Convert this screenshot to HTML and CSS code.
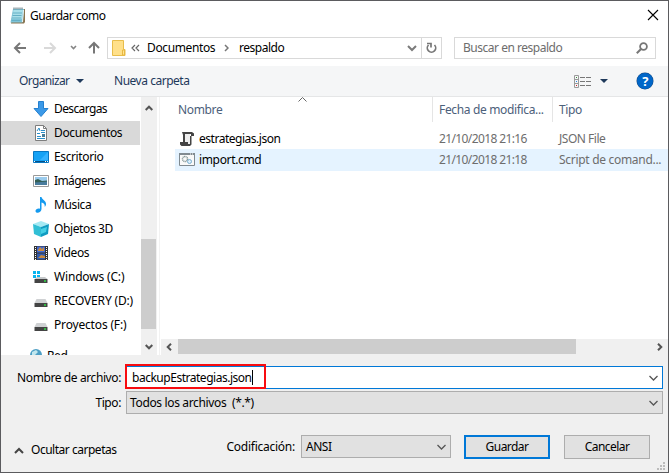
FILE: index.html
```html
<!DOCTYPE html>
<html lang="es">
<head>
<meta charset="utf-8">
<title>Guardar como</title>
<link rel="stylesheet" href="styles.css">
</head>
<body>
<div class="dialog">
  <header class="titlebar">
    <svg class="notepad" width="16" height="17" viewBox="0 0 16 17"><path d="M3.500 2h11.500v13l-1 1.500H1z" fill="#8a7550"/><path d="M3 2h11l-1.500 13.500H.5z" fill="#7fc4d8"/><path d="M3.500 3h9.500L11.500 12H2z" fill="#a9dfe9"/><path d="M3 6h9M2.500 8.500h9M2 11h9M1.500 13.500h9" stroke="#65afc5"/><path d="M13.500 3l-1 12" stroke="#e8f6f8"/><path d="M3.500 1.500h10" stroke="#526b75" stroke-width="2" stroke-dasharray="1 1"/></svg>
    <h1 class="title">Guardar como</h1>
    <svg class="close" width="12" height="12" viewBox="0 0 12 12"><path d="M1 1l10 10M11 1L1 11" stroke="#000" stroke-width="1.100"/></svg>
  </header>

  <nav class="navbar">
    <svg class="arrows" width="94" height="22" viewBox="0 0 94 22" fill="none"><path d="M25 11H14.500M19 6l-5 5 5 5" stroke="#777" stroke-width="2"/><path d="M43 11h10.500M49 6l5 5-5 5" stroke="#d9d9d9" stroke-width="2"/><path d="M70 9l2.500 2.500L75 9" stroke="#858585" stroke-width="1.600"/><path d="M93 16.500V6M88 11l5-5 5 5" stroke="#777" stroke-width="2"/></svg>
    <div class="address">
      <svg class="folder" width="14" height="16" viewBox="0 0 14 16"><path d="M.5.500h11v9h1.500v6H.5z" fill="#ffe08a" stroke="#e8bd4b"/><path d="M10.500 15V10h2v5z" fill="#ffe594" stroke="#e8b842"/></svg>
      <svg class="dbl" width="9" height="8" viewBox="0 0 9 8" fill="none" stroke="#666" stroke-width="1.200"><path d="M4 1L1 4l3 3M8 1L5 4l3 3"/></svg>
      <span class="crumb-one">Documentos</span>
      <svg class="sep" width="5" height="8" viewBox="0 0 5 8" fill="none" stroke="#777" stroke-width="1.500"><path d="M1 1l3 3-3 3"/></svg>
      <span>respaldo</span>
      <svg class="drop" width="10" height="7" viewBox="0 0 10 7" fill="none" stroke="#7b7b7b" stroke-width="2"><path d="M1 1l4 4 4-4"/></svg>
      <span class="refresh"><svg width="11" height="12" viewBox="0 0 11 12" fill="none" stroke="#777" stroke-width="1.700"><path d="M2.500 3A4.200 4.200 0 1 0 8.500 3M1 1.500h4v4"/></svg></span>
    </div>
    <div class="search">
      <span class="t-search">Buscar en respaldo</span>
      <svg width="12" height="12" viewBox="0 0 12 12" fill="none" stroke="#777"><circle cx="7.500" cy="4.500" r="3.400" stroke-width="1.800"/><path d="M5 7L.8 11.200" stroke-width="2"/></svg>
    </div>
  </nav>

  <div class="toolbar">
    <span class="t-org">Organizar</span>
    <svg class="tri" width="8" height="4" viewBox="0 0 8 4"><path d="M0 0h8L4 4z" fill="#1e395b"/></svg>
    <span>Nueva carpeta</span>
    <svg class="view" width="17" height="13" viewBox="0 0 17 13" fill="none"><path d="M.5.500h4v12h-4zM0 4.500h5M0 8.500h5" stroke="#9a9a9a"/><path d="M6 2.500h11M6 6.500h11M6 10.500h11" stroke="#777" stroke-dasharray="5 1"/><path d="M2 2.500h1" stroke="#398c39"/><path d="M2 6.500h1" stroke="#2884e8"/><path d="M2 10.500h1" stroke="#d02020"/></svg>
    <svg class="tri-two" width="8" height="4" viewBox="0 0 8 4"><path d="M0 0h8L4 4z" fill="#1e395b"/></svg>
    <span class="help">?</span>
  </div>

  <main class="content">
    <div class="tree">
      <ul class="places">
        <li class="place t-tight"><svg width="16" height="16" viewBox="0 0 16 16"><path d="M5.500.500h5v7h4.500L8 15.500 1 7.500h4.500z" fill="#3b99e8" stroke="#2580cf"/></svg><span>Descargas</span></li>
        <li class="place current"><svg width="16" height="16" viewBox="0 0 16 16"><path d="M2.500.500h8l3 3v12h-11z" fill="#fff" stroke="#7d7d7d"/><path d="M10.500.500v3h3" fill="none" stroke="#7d7d7d"/><path d="M4 6l2-3 1 3M8 5.500h4M4 8.500h3M8 7.500h4M4 11.500h4M4 13.500h8" stroke="#2c8fc9" fill="none"/><path d="M9 9h3v3H9z" fill="#467d99"/></svg><span>Documentos</span></li>
        <li class="place"><svg width="16" height="16" viewBox="0 0 16 16"><path d="M.5 2.500h15v11H.5z" fill="#16a2f5" stroke="#0877c2"/><path d="M7 11L15 3v8z" fill="#35b2ff"/><path d="M1 12.500h14" stroke="#064f84"/><path d="M1 12.500h1M12 12.500h1M14 12.500h1" stroke="#fff"/></svg><span>Escritorio</span></li>
        <li class="place t-tight"><svg width="16" height="16" viewBox="0 0 16 16"><path d="M.5 2.500h15v11H.5z" fill="#fff" stroke="#999"/><path d="M2 4h12v4H2z" fill="#9acbed"/><path d="M2 7l3-1 4 2 5-.5V10H2z" fill="#345f55"/><path d="M2 9.500l12-1V12H2z" fill="#487b9d"/></svg><span>Imágenes</span></li>
        <li class="place"><svg width="16" height="16" viewBox="0 0 16 16"><path d="M7 0h1.500c.5 3 5 3.500 4.500 7.500-.2 1.300-.8 2-1.300 2.500.3-2.500-.7-4-3.200-4.500V12c0 4-6 5-6 2 0-2 2.500-3 4.500-2.300z" fill="#149aef"/></svg><span>Música</span></li>
        <li class="place"><svg width="16" height="16" viewBox="0 0 16 16"><path d="M0 3l8-3 8 3-8 3z" fill="#a5e9f3"/><path d="M0 3l8 3v10l-7-3z" fill="#31bfd5"/><path d="M16 3L8 6v10l7-3z" fill="#109bc1"/><path d="M8 8l6-2-1 5-5 2z" fill="#45d0e5"/></svg><span>Objetos 3D</span></li>
        <li class="place"><svg width="16" height="16" viewBox="0 0 16 16"><path d="M1 1h14v14H1z" fill="#333"/><path d="M4 1.500h8v6H4z" fill="#426bd2"/><path d="M4 8.500h8v6H4z" fill="#315bad"/><path d="M5 5l2-3 2 2 2-2v4H5zM5 13l3-3 4 1v2z" fill="#c88a3f"/><path d="M2.500 2v13M13.500 2v13" stroke="#fff" stroke-dasharray="1 1"/></svg><span>Videos</span></li>
        <li class="place t-drive"><svg width="16" height="16" viewBox="0 0 16 16"><path d="M0 2h3v3H0zM4 2h3v3H4zM0 6h3v3H0zM4 6h3v3H4z" fill="#08b4ef"/><path d="M4 8h8l2.500 2H2z" fill="#c5c8ca"/><path d="M1.500 10h13v4h-13z" fill="#444"/><path d="M11 12h2" stroke="#30dc45" stroke-width="1.500"/></svg><span>Windows (C:)</span></li>
        <li class="place t-drive"><svg width="16" height="16" viewBox="0 0 16 16"><path d="M3.500 6h9l2 4h-13z" fill="#cfd1d3"/><path d="M1.500 10h13v4h-13z" fill="#444"/><path d="M11 12h2" stroke="#30dc45" stroke-width="1.500"/></svg><span>RECOVERY (D:)</span></li>
        <li class="place t-drive"><svg width="16" height="16" viewBox="0 0 16 16"><path d="M3.500 6h9l2 4h-13z" fill="#cfd1d3"/><path d="M1.500 10h13v4h-13z" fill="#444"/><path d="M11 12h2" stroke="#30dc45" stroke-width="1.500"/></svg><span>Proyectos (F:)</span></li>
        <li class="place network"><svg width="16" height="16" viewBox="0 0 16 16"><circle cx="7" cy="7" r="6" fill="#4e9fc5"/><path d="M3 4l4-2 2 2-3 3H3z" fill="#c2e7ee"/></svg><span>Red</span></li>
      </ul>
      <div class="vscroll">
        <svg width="8" height="6" viewBox="0 0 8 6" fill="none" stroke="#555" stroke-width="2"><path d="M.7 5L4 1.700 7.300 5"/></svg>
        <div class="vthumb"></div>
        <svg width="8" height="6" viewBox="0 0 8 6" fill="none" stroke="#555" stroke-width="2"><path d="M.7 1L4 4.300 7.300 1"/></svg>
      </div>
    </div>
    <section class="files">
      <div class="head">
        <span class="c-name">Nombre<svg class="sort" width="9" height="5" viewBox="0 0 9 5" fill="none" stroke="#666"><path d="M.5 4.500l4-4 4 4"/></svg></span>
        <span class="c-date">Fecha de modifica...</span>
        <span class="c-type">Tipo</span>
      </div>
      <div class="file">
        <span class="f-name"><svg width="16" height="16" viewBox="0 0 16 16"><path d="M4 3h7v10H4z" fill="#eee"/><path d="M3 1h10l2 1.500V5h-3V3H6v9H4V4z" fill="#444"/><path d="M1 11h8v2h2V5h1.500v8.500L11 15H2.500L1 13.500z" fill="#444"/></svg><span>estrategias.json</span></span>
        <span class="f-date">21/10/2018 21:16</span>
        <span class="f-type">JSON File</span>
      </div>
      <div class="file selected">
        <span class="f-name"><svg width="16" height="14" viewBox="0 0 16 14"><path d="M.5.500h15v12H.5z" fill="#f9f9f9" stroke="#808a90"/><path d="M0 1h16" stroke="#808a90" stroke-width="2"/><path d="M11 1h1M13 1h1" stroke="#fff"/><circle cx="6" cy="6" r="2.500" fill="none" stroke="#899" stroke-dasharray="1 .5" stroke-width="1.500"/><circle cx="10.500" cy="8.500" r="2" fill="#dceefa" stroke="#78aed0"/></svg><span class="t-cmd">import.cmd</span></span>
        <span class="f-date">21/10/2018 21:18</span>
        <span class="f-type t-script">Script de comand...</span>
      </div>
      <div class="hscroll">
        <svg width="6" height="8" viewBox="0 0 6 8" fill="none" stroke="#555" stroke-width="2"><path d="M5 .7L1.700 4 5 7.300"/></svg>
        <div class="hthumb"></div>
        <svg width="6" height="8" viewBox="0 0 6 8" fill="none" stroke="#555" stroke-width="2"><path d="M1 .7L4.300 4 1 7.300"/></svg>
      </div>
    </section>
  </main>

  <footer class="form">
    <div class="row">
      <label class="label">Nombre de archivo:</label>
      <div class="field input"><span class="t-input">backupEstrategias.json</span><i class="caret"></i><svg class="chev" width="9" height="6" viewBox="0 0 9 6"><path d="M.5 1l4 4 4-4"/></svg><div class="mark"></div></div>
    </div>
    <div class="row">
      <label class="label">Tipo:</label>
      <div class="field"><span class="t-all">Todos los archivos&nbsp; (*.*)</span><svg class="chev" width="9" height="6" viewBox="0 0 9 6"><path d="M.5 1l4 4 4-4"/></svg></div>
    </div>
    <div class="actions">
      <span class="hide"><svg width="10" height="7" viewBox="0 0 10 7" fill="none" stroke="#444" stroke-width="2"><path d="M1 6l4-4 4 4"/></svg><span>Ocultar carpetas</span></span>
      <span class="enc">Codificación:</span>
      <div class="combo"><span>ANSI</span><svg class="chev" width="9" height="6" viewBox="0 0 9 6"><path d="M.5 1l4 4 4-4"/></svg></div>
      <button class="btn primary">Guardar</button>
      <button class="btn">Cancelar</button>
    </div>
    <svg class="grip" width="8" height="8" viewBox="0 0 8 8"><path d="M6 0h2v2H6zM3 3h2v2H3zM6 3h2v2H6zM0 6h2v2H0zM3 6h2v2H3zM6 6h2v2H6z" fill="#bcbcbc"/></svg>
  </footer>
</div>
</body>
</html>
```
FILE: styles.css
```css
* { box-sizing: border-box; }
body { margin: 0; font: 12px/16px "Noto Sans", "Open Sans", sans-serif; letter-spacing: -.48px; color: #000; }
svg { display: block; flex: none; }
span, label { white-space: nowrap; }
.dialog { width: 669px; height: 473px; border: 1px solid #5b5b5e; background: #fff; display: flex; flex-direction: column; overflow: hidden; }

.titlebar { height: 36px; flex: none; display: flex; align-items: flex-start; padding: 6px 8px 0 9px; }
.title { margin: 1px auto 0 4px; font-size: 12px; font-weight: 400; line-height: 16px; }
.close { margin: 2px 1px 0 0; }

.navbar { height: 29px; flex: none; display: flex; align-items: flex-start; }
.arrows { margin-right: 12px; overflow: visible; }
.address { width: 335px; height: 22px; border: 1px solid #d9d9d9; display: flex; align-items: center; padding-left: 4px; }
.dbl { margin: 0 7px 0 5px; }
.crumb-one { width: 68px; letter-spacing: -.38px; }
.drop { margin: 1px 4px 0 auto; }
.refresh { width: 20px; height: 20px; border-left: 1px solid #d9d9d9; display: flex; align-items: center; justify-content: center; }
.sep { margin: 0 10px 0 9px; }
.search { width: 202px; height: 22px; margin-left: 12px; border: 1px solid #d9d9d9; display: flex; align-items: center; justify-content: space-between; padding: 0 7px 0 8px; color: #6d6d6d; }

.toolbar { height: 31px; flex: none; background: #f5f6f7; border-bottom: 1px solid #e5e6e7; display: flex; align-items: center; padding-left: 18px; color: #1e395b; }
.t-org { width: 51px; letter-spacing: -.65px; }
.tri { margin: 0 30px 0 6px; }
.view { margin-left: auto; }
.tri-two { margin: 0 29px 0 9px; }
.help { width: 16px; height: 16px; border-radius: 50%; background: #0066c8; box-shadow: 0 0 0 .5px #17467b; color: #fff; font-weight: 700; font-size: 13px; line-height: 16px; text-align: center; margin-right: 15px; }

.content { height: 258px; flex: none; display: flex; }
.tree { width: 159px; display: flex; border-right: 1px solid #f2f2f2; }
.places { width: 140px; height: 258px; margin: 0; padding: 0; list-style: none; overflow: hidden; letter-spacing: -.38px; }
.place { width: 139px; height: 24px; display: flex; align-items: center; gap: 5px; padding-left: 32px; }
.t-tight { letter-spacing: -.62px; }
.t-drive { letter-spacing: -.17px; }
.current { background: #d9d9d9; }
.network { margin-top: 7px; padding-left: 28px; gap: 2px; }
.vscroll { width: 16px; background: #f0f0f0; display: flex; flex-direction: column; align-items: center; padding: 8px 0 5px; }
.vthumb { width: 15px; height: 90px; background: #cdcdcd; margin: auto 0 15px; align-self: flex-start; }

.files { flex: 1; display: flex; flex-direction: column; min-width: 0; }
.head { height: 32px; flex: none; display: flex; color: #4c607a; line-height: 26px; letter-spacing: -.35px; }
.head > span { height: 25px; }
.c-name { width: 272px; padding-left: 18px; position: relative; }
.sort { position: absolute; left: 138px; top: 0; }
.c-date { width: 120px; padding-left: 6px; border-left: 1px solid #e5e5e5; }
.c-type { padding-left: 6px; border-left: 1px solid #e5e5e5; }
.file { height: 20px; flex: none; margin-left: 15px; display: flex; align-items: center; color: #6d6d6d; }
.selected { height: 22px; background: #e5f3ff; }
.f-name { width: 264px; display: flex; align-items: center; gap: 4px; padding-left: 4px; color: #000; }
.f-date { width: 120px; letter-spacing: -.62px; }
.t-cmd { letter-spacing: -.35px; }
.t-script { letter-spacing: -.3px; }
.hscroll { height: 16px; margin-top: auto; margin-left: 1px; background: #f0f0f0; display: flex; align-items: center; padding: 0 5px; }
.hthumb { width: 398px; height: 15px; background: #cdcdcd; margin: 0 auto 1px 6px; }

.form { flex: 1; background: #f0f0f0; padding-top: 11px; position: relative; }
.row { display: flex; align-items: center; height: 23px; margin-bottom: 2px; }
.label { width: 120px; margin-right: 5px; text-align: right; letter-spacing: -.4px; }
.field { width: 537px; height: 23px; border: 1px solid #adadad; background: #e1e1e1; display: flex; align-items: center; padding: 0 4px 0 3px; position: relative; }
.input { background: #fff; border-color: #0078d7; padding-left: 5px; }
.caret { width: 1px; height: 15px; background: #000; }
.t-all { letter-spacing: -.35px; }
.mark { position: absolute; left: -2px; top: -3px; width: 141px; height: 25px; border: 2px solid #f80c10; }
.chev { margin-left: auto; fill: none; stroke: #555; stroke-width: 1.3; }
.actions { display: flex; align-items: flex-start; padding: 19px 0 0 13px; }
.hide { width: 212px; display: flex; align-items: center; gap: 7px; padding-top: 7px; }
.enc { width: 69px; text-align: right; padding-top: 4px; letter-spacing: -.25px; }
.combo { width: 150px; height: 23px; margin: 0 13px 0 6px; border: 1px solid #adadad; background: #e1e1e1; display: flex; align-items: center; padding: 0 4px 0 4px; }
.btn { width: 86px; height: 24px; margin: 0 14px 0 0; padding: 0; border: 1px solid #adadad; background: #e1e1e1; color: #000; font: inherit; letter-spacing: -.55px; }
.primary { border: 2px solid #0078d7; }
.grip { position: absolute; right: 3px; bottom: 2px; }
```
